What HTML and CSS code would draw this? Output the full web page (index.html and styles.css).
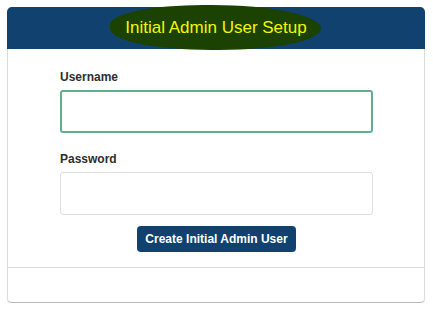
FILE: index.html
```html
<!DOCTYPE html>
<html lang="en">
<head>
    <meta charset="UTF-8">
    <meta name="viewport" content="width=device-width, initial-scale=1.0">
    <title>Initial Admin User Setup</title>
    <link rel="stylesheet" href="styles.css">
</head>
<body>
    <div class="card">
        <div class="card-header">
            <span class="title">Initial Admin User Setup</span>
        </div>
        <form class="card-body" onsubmit="return false">
            <div class="field">
                <label for="username">Username</label>
                <input type="text" id="username" name="username" class="active">
            </div>
            <div class="field last">
                <label for="password">Password</label>
                <input type="password" id="password" name="password">
            </div>
            <div class="actions">
                <button type="submit">Create Initial Admin User</button>
            </div>
        </form>
        <div class="card-footer"></div>
    </div>
</body>
</html>
```

FILE: styles.css
```css
body {
    font-family: 'Liberation Sans', Arial, sans-serif;
    margin: 0;
    padding: 7px 8px 0 7px;
    background: #fff;
    color: #333;
}
.card {
    border: 1px solid #dcdcdc;
    border-bottom-color: #b8b8b8;
    border-radius: 5px;
    box-shadow: 0 1px 1px rgba(0, 0, 0, 0.12);
    background: #fff;
}
.card-header {
    height: 42px;
    margin: -1px -1px 0 -1px;
    background: #11426f;
    border-radius: 5px 5px 0 0;
    display: flex;
    align-items: center;
    justify-content: center;
}
.title {
    position: relative;
    font-size: 17px;
    line-height: 20px;
    color: #f6f600;
    z-index: 1;
}
/* marker highlight drawn over the header */
.title::before {
    content: '';
    position: absolute;
    left: -15px;
    right: -14px;
    top: -13px;
    bottom: -12px;
    background: #1b4200;
    border-radius: 46% 54% 50% 50%;
    z-index: -1;
}
.card-body {
    padding: 21px 51px 0 52px;
}
.field {
    margin-bottom: 19px;
}
.field.last {
    margin-bottom: 11px;
}
label {
    display: block;
    font-size: 12px;
    font-weight: bold;
    line-height: 15px;
    margin-bottom: 5px;
    color: #2e2e2e;
}
input {
    display: block;
    box-sizing: border-box;
    width: 100%;
    height: 43px;
    border: 1px solid #dedede;
    border-radius: 3px;
    background: #fff;
    font-size: 13px;
    padding: 0 10px;
    outline: none;
}
input.active {
    border: 2px solid #62b08a;
}
.actions {
    text-align: center;
    padding-bottom: 15px;
}
button {
    display: inline-block;
    vertical-align: top;
    width: 159px;
    height: 26px;
    border: none;
    border-radius: 4px;
    background: #11426f;
    color: #fff;
    font-family: 'Liberation Sans', Arial, sans-serif;
    font-size: 12px;
    font-weight: bold;
    cursor: pointer;
}
.card-footer {
    height: 34px;
    border-top: 1px solid #dcdcdc;
}
```
